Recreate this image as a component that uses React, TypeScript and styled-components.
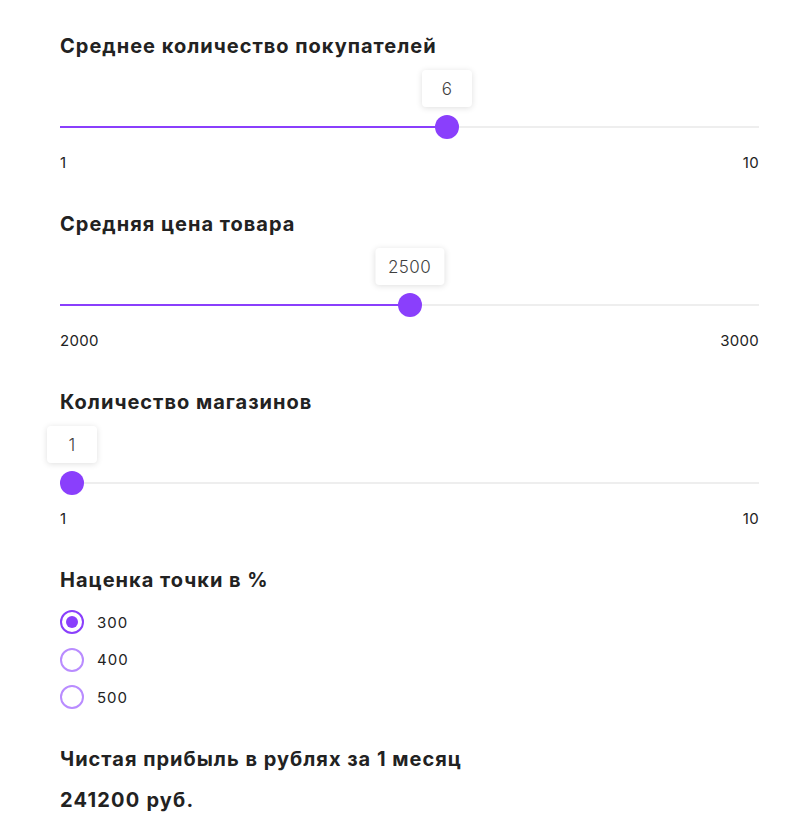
import React, { useState } from "react";
import styled, { createGlobalStyle } from "styled-components";

const purple = "#8a3ffc";
const purpleLight = "#b98cff";
const text = "#222222";

const GlobalStyle = createGlobalStyle`
  body {
    margin: 0;
    background: #ffffff;
    font-family: Inter, "Noto Sans", Arial, sans-serif;
    color: ${text};
  }
`;

const Page = styled.div`
  padding: 34px 28px 20px 60px;
  display: flex;
  flex-direction: column;
`;

const Section = styled.section<{ $gap?: number }>`
  display: flex;
  flex-direction: column;
  margin-bottom: ${(p) => p.$gap ?? 39}px;
`;

const Title = styled.h3`
  margin: 0;
  font-size: 20px;
  line-height: 24px;
  font-weight: 700;
  letter-spacing: 1px;
  color: ${text};
`;

const SliderBox = styled.div`
  position: relative;
  height: 24px;
  margin-top: 57px;
`;

const Rail = styled.div`
  position: absolute;
  left: 0;
  right: 0;
  top: 11px;
  height: 2px;
  background: #eeeeee;
`;

const Fill = styled.div`
  position: absolute;
  left: 0;
  top: 11px;
  height: 2px;
  background: ${purple};
`;

const Thumb = styled.div`
  position: absolute;
  top: 0;
  width: 24px;
  height: 24px;
  margin-left: -12px;
  border-radius: 50%;
  background: ${purple};
  cursor: pointer;
`;

const Bubble = styled.div`
  position: absolute;
  bottom: calc(100% + 8px);
  left: 50%;
  transform: translateX(-50%);
  min-width: 50px;
  height: 37px;
  padding: 0 13px;
  box-sizing: border-box;
  display: flex;
  align-items: center;
  justify-content: center;
  background: #ffffff;
  border-radius: 4px;
  box-shadow: 0 1px 6px rgba(0, 0, 0, 0.13);
  font-size: 17px;
  font-weight: 300;
  letter-spacing: 0.4px;
  color: #3f3f3f;
  white-space: nowrap;
`;

const Limits = styled.div`
  display: flex;
  justify-content: space-between;
  margin-top: 14px;
  font-size: 15px;
  line-height: 20px;
  font-weight: 400;
  letter-spacing: 0.3px;
  color: ${text};
`;

const RadioList = styled.div`
  display: flex;
  flex-direction: column;
  gap: 13.5px;
  margin-top: 18px;
`;

const RadioRow = styled.label`
  display: flex;
  align-items: center;
  gap: 13px;
  height: 24px;
  cursor: pointer;
  font-size: 15px;
  letter-spacing: 1px;
  color: ${text};
`;

const RadioCircle = styled.span<{ $checked: boolean }>`
  width: 24px;
  height: 24px;
  box-sizing: border-box;
  border-radius: 50%;
  border: 2px solid ${(p) => (p.$checked ? purple : purpleLight)};
  display: flex;
  align-items: center;
  justify-content: center;

  &::after {
    content: "";
    width: 12px;
    height: 12px;
    border-radius: 50%;
    background: ${purple};
    display: ${(p) => (p.$checked ? "block" : "none")};
  }
`;

const Result = styled.div`
  margin-top: 17px;
  font-size: 20px;
  line-height: 24px;
  font-weight: 700;
  letter-spacing: 1.2px;
  color: ${text};
`;

interface SliderProps {
  title: string;
  min: number;
  max: number;
  value: number;
}

const Slider: React.FC<SliderProps> = ({ title, min, max, value }) => {
  const pct = (value - min) / (max - min);
  const pos = `calc(12px + (100% - 24px) * ${pct})`;
  return (
    <Section>
      <Title>{title}</Title>
      <SliderBox>
        <Rail />
        <Fill style={{ width: pos }} />
        <Thumb style={{ left: pos }}>
          <Bubble>{value}</Bubble>
        </Thumb>
      </SliderBox>
      <Limits>
        <span>{min}</span>
        <span>{max}</span>
      </Limits>
    </Section>
  );
};

const markups = [300, 400, 500];

const App: React.FC = () => {
  const [markup, setMarkup] = useState(300);
  const customers = 6;
  const price = 2500;
  const shops = 1;

  return (
    <>
      <GlobalStyle />
      <Page>
        <Slider title="Среднее количество покупателей" min={1} max={10} value={customers} />
        <Slider title="Средняя цена товара" min={2000} max={3000} value={price} />
        <Slider title="Количество магазинов" min={1} max={10} value={shops} />
        <Section $gap={38}>
          <Title>Наценка точки в %</Title>
          <RadioList>
            {markups.map((m) => (
              <RadioRow key={m} onClick={() => setMarkup(m)}>
                <RadioCircle $checked={markup === m} />
                <span>{m}</span>
              </RadioRow>
            ))}
          </RadioList>
        </Section>
        <Section $gap={0}>
          <Title>Чистая прибыль в рублях за 1 месяц</Title>
          <Result>241200 руб.</Result>
        </Section>
      </Page>
    </>
  );
};

export default App;
